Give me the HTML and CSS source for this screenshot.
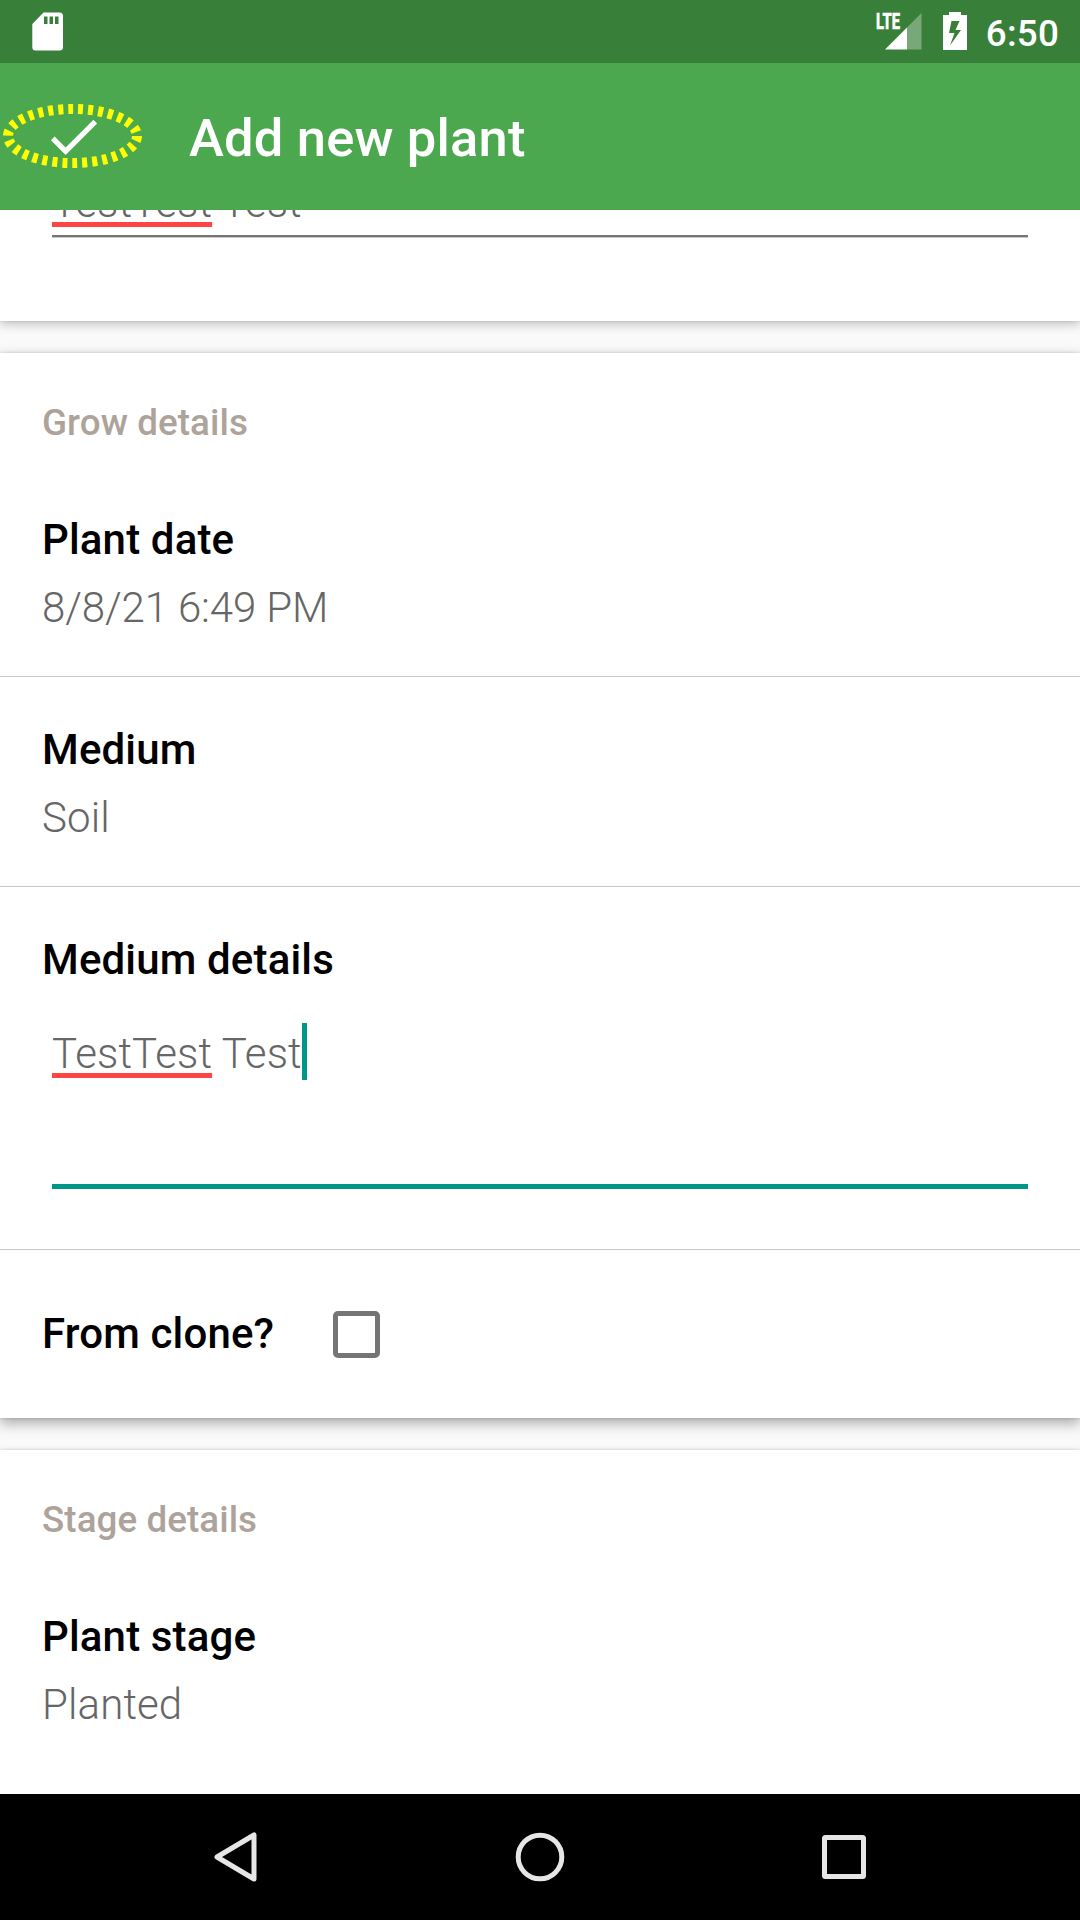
FILE: index.html
```html
<!DOCTYPE html>
<html lang="en">
<head>
<meta charset="utf-8">
<title>Add new plant</title>
<link rel="stylesheet" href="styles.css">
</head>
<body>
<div class="screen">
  <div class="status-bar">
    <svg class="sd-icon" width="31" height="39" viewBox="0 0 31 39"><path fill="#fff" fill-rule="evenodd" d="M11.500 .5H27.500Q31 .5 31 4V35Q31 38.500 27.500 38.500H3.500Q.3 38.500 .3 35V12ZM12 4.500V12H15.500V4.500ZM17.500 4.500V12H21V4.500ZM23 4.500V12H26.500V4.500Z"/></svg>
    <div class="status-right">
      <svg class="signal-icon" width="46" height="38" viewBox="0 0 46 38">
        <path fill="#fff" fill-opacity=".32" d="M31 15.500L45.500 1V37.500H31Z"/>
        <path fill="#fff" d="M9 37.500L31 15.500V37.500Z"/>
        <text class="lte" x="0" y="17" textLength="24" lengthAdjust="spacingAndGlyphs">LTE</text>
      </svg>
      <svg class="battery-icon" width="24" height="38" viewBox="0 0 24 38"><path fill="#fff" fill-rule="evenodd" d="M6 0H18V3H24V38H0V3H6ZM8.500 9L6 21H11.500L7 33.500L18 18H12.500L16.500 9Z"/></svg>
      <span class="clock">6:50</span>
    </div>
  </div>

  <header class="app-bar">
    <svg class="done-icon" width="63" height="63" viewBox="0 0 24 24"><path fill="#fff" d="M9 16.170L4.830 12l-1.420 1.410L9 19 21 7l-1.410-1.410z"/></svg>
    <h1 class="title">Add new plant</h1>
    <svg class="focus-ring" width="146" height="70" viewBox="0 0 146 70"><ellipse cx="72.500" cy="35" rx="64.500" ry="27"/></svg>
  </header>

  <main class="content">
    <section class="card card-first">
      <div class="input"><span class="misspelled">TestTest</span> Test</div>
    </section>

    <section class="card card-raised">
      <h2 class="card-title">Grow details</h2>
      <div class="row">
        <div class="label">Plant date</div>
        <div class="value date">8/8/21 6:49 PM</div>
      </div>
      <div class="row">
        <div class="label">Medium</div>
        <div class="value">Soil</div>
      </div>
      <div class="row row-input">
        <div class="label">Medium details</div>
        <div class="input input-focused"><span class="misspelled">TestTest</span> Test<span class="caret"></span></div>
      </div>
      <div class="row row-check">
        <div class="label">From clone?</div>
        <span class="checkbox"></span>
      </div>
    </section>

    <section class="card card-last">
      <h2 class="card-title">Stage details</h2>
      <div class="row">
        <div class="label">Plant stage</div>
        <div class="value">Planted</div>
      </div>
    </section>
  </main>

  <nav class="nav-bar">
    <svg width="50" height="50" viewBox="0 0 50 50"><path d="M43 3V47L6 25Z"/></svg>
    <svg width="50" height="50" viewBox="0 0 50 50"><circle cx="25" cy="25" r="21.800"/></svg>
    <svg width="50" height="50" viewBox="0 0 50 50"><rect x="5.500" y="5.500" width="39" height="39" rx="1"/></svg>
  </nav>
</div>
</body>
</html>
```
FILE: styles.css
```css
* {
  box-sizing: border-box;
}

body {
  margin: 0;
  background: #fafafa;
  font-family: Roboto, "Noto Sans", sans-serif;
}

.screen {
  display: flex;
  flex-direction: column;
  width: 1080px;
  height: 1920px;
  overflow: hidden;
}

/* Status bar */
.status-bar {
  display: flex;
  flex: none;
  justify-content: space-between;
  align-items: flex-start;
  height: 63px;
  padding: 12px 21px 0 32px;
  background: #387f3a;
}

.status-right {
  display: flex;
  align-items: flex-start;
}

.signal-icon {
  overflow: visible;
}

.battery-icon {
  margin-left: 21px;
}

.lte {
  font-size: 22.5px;
  font-weight: 800;
  fill: #fff;
  stroke: #fff;
  stroke-width: .5px;
}

.clock {
  margin: 1px 0 0 19px;
  color: #fff;
  font-size: 36.75px;
  font-weight: 500;
  letter-spacing: .2px;
  line-height: 42px;
}

/* App bar */
.app-bar {
  position: relative;
  z-index: 1;
  display: flex;
  flex: none;
  align-items: center;
  height: 147px;
  padding-left: 42px;
  background: #4ba84e;
}

.title {
  margin: 3px 0 0 84px;
  color: #fff;
  font-size: 52.5px;
  font-weight: 500;
  letter-spacing: .18px;
  line-height: 62px;
}

.focus-ring {
  position: absolute;
  left: 0;
  top: 38px;
}

.focus-ring ellipse {
  fill: none;
  stroke: #ff0;
  stroke-width: 10;
  stroke-dasharray: 5 5;
}

/* Scrolled form */
.content {
  display: flex;
  flex: none;
  flex-direction: column;
  gap: 32px;
  height: 1584px;
  overflow: hidden;
}

.card {
  flex: none;
  background: #fff;
  box-shadow: 0 4px 10px rgba(0, 0, 0, .2), 0 0 3px rgba(0, 0, 0, .15);
}

.card-raised {
  box-shadow: 0 5px 13px rgba(0, 0, 0, .34), 0 0 3px rgba(0, 0, 0, .15);
}

.card-first {
  height: 191px;
  margin-top: -80px;
  padding: 48px 52px 0;
}

.card-first .input {
  height: 59px;
  margin: 0;
  border-bottom: 2px solid #757575;
  box-shadow: 0 1px #c8c8c8;
}

.card-last {
  height: 400px;
}

.card-title {
  margin: 0;
  padding: 48px 42px 22px;
  color: #ada39b;
  font-size: 36.75px;
  font-weight: 500;
  letter-spacing: .08px;
  line-height: 44px;
}

.row {
  display: flex;
  flex-direction: column;
  gap: 18px;
  padding: 48px 42px 43px;
}

.row + .row {
  border-top: 1px solid #c8c8c8;
}

.label {
  color: #000;
  font-size: 42px;
  font-weight: 500;
  letter-spacing: .15px;
  line-height: 50px;
}

.value,
.input {
  color: #666;
  font-size: 42px;
  font-weight: 300;
  letter-spacing: .12px;
  line-height: 50px;
}

.value.date {
  letter-spacing: -.13px;
}

.row-input {
  gap: 44px;
  padding-bottom: 60px;
}

.input-focused {
  height: 160px;
  margin: 0 10px;
  border-bottom: 5px solid #009688;
}

.misspelled {
  text-decoration: underline #ff4444 5px;
  text-decoration-skip-ink: none;
  text-underline-offset: 5px;
}

.caret {
  display: inline-block;
  width: 5px;
  height: 57px;
  margin: -10px 0;
  vertical-align: -2px;
  background: #009688;
}

.row-check {
  flex-direction: row;
  align-items: center;
  gap: 59px;
  height: 169px;
  padding: 0 42px;
}

.checkbox {
  width: 47px;
  height: 47px;
  border: 5px solid #757575;
  border-radius: 5px;
}

/* Navigation bar */
.nav-bar {
  display: flex;
  flex: none;
  justify-content: space-between;
  align-items: center;
  height: 126px;
  padding: 0 211px;
  background: #000;
}

.nav-bar path,
.nav-bar circle,
.nav-bar rect {
  fill: none;
  stroke: #e6e6e6;
  stroke-width: 5;
  stroke-linejoin: round;
}
```
